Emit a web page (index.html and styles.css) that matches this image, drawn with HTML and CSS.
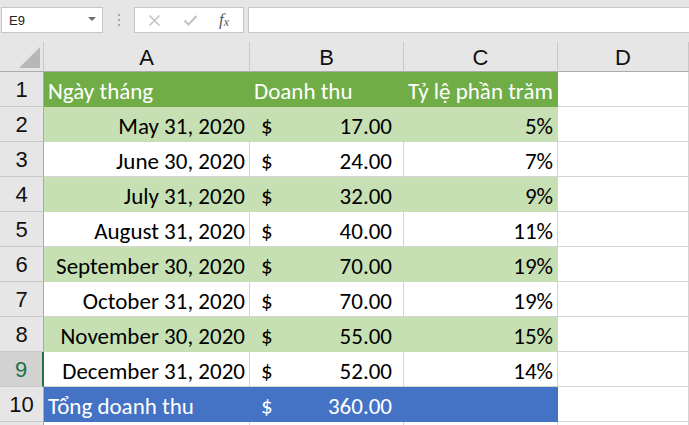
FILE: index.html
```html
<!DOCTYPE html>
<html lang="vi">
<head>
<meta charset="utf-8">
<title>Doanh thu</title>
<link rel="stylesheet" href="styles.css">
</head>
<body>
<div class="toolbar">
  <div class="namebox">
    <span class="ref">E9</span>
    <span class="caret"></span>
  </div>
  <div class="grip"><i></i><i></i><i></i></div>
  <div class="fbtns">
    <svg class="ic" width="13" height="13" viewBox="0 0 13 13"><path d="M1.5 1.5 L11.5 11.5 M11.5 1.5 L1.5 11.5" stroke="#c2c2c2" stroke-width="1.5" fill="none"/></svg>
    <svg class="ic" width="15" height="13" viewBox="0 0 15 13"><path d="M1.5 6.5 L5.5 10.5 L13.5 2" stroke="#c2c2c2" stroke-width="2" fill="none"/></svg>
    <span class="fx">f<sub>x</sub></span>
  </div>
  <div class="formula"></div>
</div>

<div class="sheet">
  <div class="corner"><span class="tri"></span></div>
  <div class="colh">A</div>
  <div class="colh">B</div>
  <div class="colh">C</div>
  <div class="colh">D</div>

  <div class="rowh">1</div>
  <div class="cell hd">Ngày tháng</div>
  <div class="cell hd">Doanh thu</div>
  <div class="cell hd">Tỷ lệ phần trăm</div>
  <div class="cell"></div>

  <div class="rowh">2</div>
  <div class="cell lg r">May 31, 2020</div>
  <div class="cell lg acc"><span>$</span><span>17.00</span></div>
  <div class="cell lg r">5%</div>
  <div class="cell"></div>

  <div class="rowh">3</div>
  <div class="cell r">June 30, 2020</div>
  <div class="cell acc"><span>$</span><span>24.00</span></div>
  <div class="cell r">7%</div>
  <div class="cell"></div>

  <div class="rowh">4</div>
  <div class="cell lg r">July 31, 2020</div>
  <div class="cell lg acc"><span>$</span><span>32.00</span></div>
  <div class="cell lg r">9%</div>
  <div class="cell"></div>

  <div class="rowh">5</div>
  <div class="cell r">August 31, 2020</div>
  <div class="cell acc"><span>$</span><span>40.00</span></div>
  <div class="cell r">11%</div>
  <div class="cell"></div>

  <div class="rowh">6</div>
  <div class="cell lg r">September 30, 2020</div>
  <div class="cell lg acc"><span>$</span><span>70.00</span></div>
  <div class="cell lg r">19%</div>
  <div class="cell"></div>

  <div class="rowh">7</div>
  <div class="cell r">October 31, 2020</div>
  <div class="cell acc"><span>$</span><span>70.00</span></div>
  <div class="cell r">19%</div>
  <div class="cell"></div>

  <div class="rowh">8</div>
  <div class="cell lg r">November 30, 2020</div>
  <div class="cell lg acc"><span>$</span><span>55.00</span></div>
  <div class="cell lg r">15%</div>
  <div class="cell"></div>

  <div class="rowh sel">9</div>
  <div class="cell r">December 31, 2020</div>
  <div class="cell acc"><span>$</span><span>52.00</span></div>
  <div class="cell r">14%</div>
  <div class="cell"></div>

  <div class="rowh">10</div>
  <div class="cell bl">Tổng doanh thu</div>
  <div class="cell bl acc"><span>$</span><span>360.00</span></div>
  <div class="cell bl"></div>
  <div class="cell"></div>

  <div class="rowh"></div>
  <div class="cell"></div>
  <div class="cell"></div>
  <div class="cell"></div>
  <div class="cell"></div>
</div>
</body>
</html>
```

FILE: styles.css
```css
* { box-sizing: border-box; }
html, body { margin: 0; padding: 0; }
body {
  width: 689px;
  height: 425px;
  overflow: hidden;
  background: #e6e6e6;
  font-family: Carlito, Lato, "Liberation Sans", sans-serif;
}

.toolbar {
  height: 42px;
  display: flex;
  align-items: flex-start;
  padding: 7px 0 0 1px;
}
.namebox {
  width: 102px;
  height: 26px;
  background: #fff;
  border: 1px solid #c6c6c6;
  display: flex;
  align-items: center;
  justify-content: space-between;
  padding: 0 6px 0 7px;
}
.ref {
  font-family: "Liberation Sans", Arial, sans-serif;
  font-size: 13px;
  color: #222;
}
.caret {
  width: 0; height: 0;
  border-left: 4px solid transparent;
  border-right: 4px solid transparent;
  border-top: 4px solid #707070;
  margin-top: -2px;
}
.grip {
  width: 31px;
  height: 26px;
  display: flex;
  flex-direction: column;
  align-items: center;
  justify-content: center;
  gap: 3px;
}
.grip i {
  display: block;
  width: 2px; height: 2px;
  background: #a6a6a6;
}
.fbtns {
  width: 110px;
  height: 26px;
  background: #fff;
  border: 1px solid #c6c6c6;
  display: flex;
  align-items: center;
  padding: 0 0 0 13px;
  gap: 22px;
}
.fx {
  font-family: "Liberation Serif", "DejaVu Serif", serif;
  font-style: italic;
  font-size: 17px;
  color: #5a5a5a;
  line-height: 1;
  margin-left: -1px;
  margin-top: -2px;
}
.fx sub { font-size: 12px; vertical-align: -1px; }
.formula {
  flex: 1;
  height: 26px;
  margin-left: 4px;
  background: #fff;
  border: 1px solid #c6c6c6;
  border-right: none;
}

.sheet {
  display: grid;
  grid-template-columns: 44px 206px 154px 154px 1fr;
  grid-template-rows: 30px repeat(11, 35px);
  background: #fff;
}
.corner {
  background: #e6e6e6;
  border-right: 1px solid #c8c8c8;
  border-bottom: 1px solid #ababab;
  position: relative;
}
.tri {
  position: absolute;
  right: 3px;
  bottom: 3px;
  width: 0; height: 0;
  border-left: 21px solid transparent;
  border-bottom: 21px solid #b7b7b7;
}
.colh {
  background: #e6e6e6;
  border-right: 1px solid #c8c8c8;
  border-bottom: 1px solid #ababab;
  font-family: "Liberation Sans", Arial, sans-serif;
  font-size: 22px;
  color: #111;
  display: flex;
  align-items: center;
  justify-content: center;
  padding-top: 2px;
}
.rowh {
  background: #e6e6e6;
  border-right: 1px solid #ababab;
  border-bottom: 1px solid #c8c8c8;
  font-family: "Liberation Sans", Arial, sans-serif;
  font-size: 22px;
  color: #111;
  display: flex;
  align-items: center;
  justify-content: center;
  padding-top: 2px;
}
.rowh.sel {
  background: #d2d2d2;
  color: #217346;
  border-right: 2px solid #217346;
}

.cell {
  border-right: 1px solid #d4d4d4;
  border-bottom: 1px solid #d4d4d4;
  font-size: 23px;
  color: #000;
  display: flex;
  align-items: center;
  padding: 4px 4px 0 4px;
  white-space: nowrap;
  overflow: hidden;
}
.cell.r { justify-content: flex-end; }
.cell.acc {
  justify-content: space-between;
  padding-left: 11px;
  padding-right: 11px;
}
.cell.hd {
  background: #70ad47;
  border-color: #70ad47;
  color: #fff;
}
.cell.lg {
  background: #c6e0b4;
  border-color: #c6e0b4;
}
.cell.bl {
  background: #4472c4;
  border-color: #4472c4;
  color: #fff;
}
```
